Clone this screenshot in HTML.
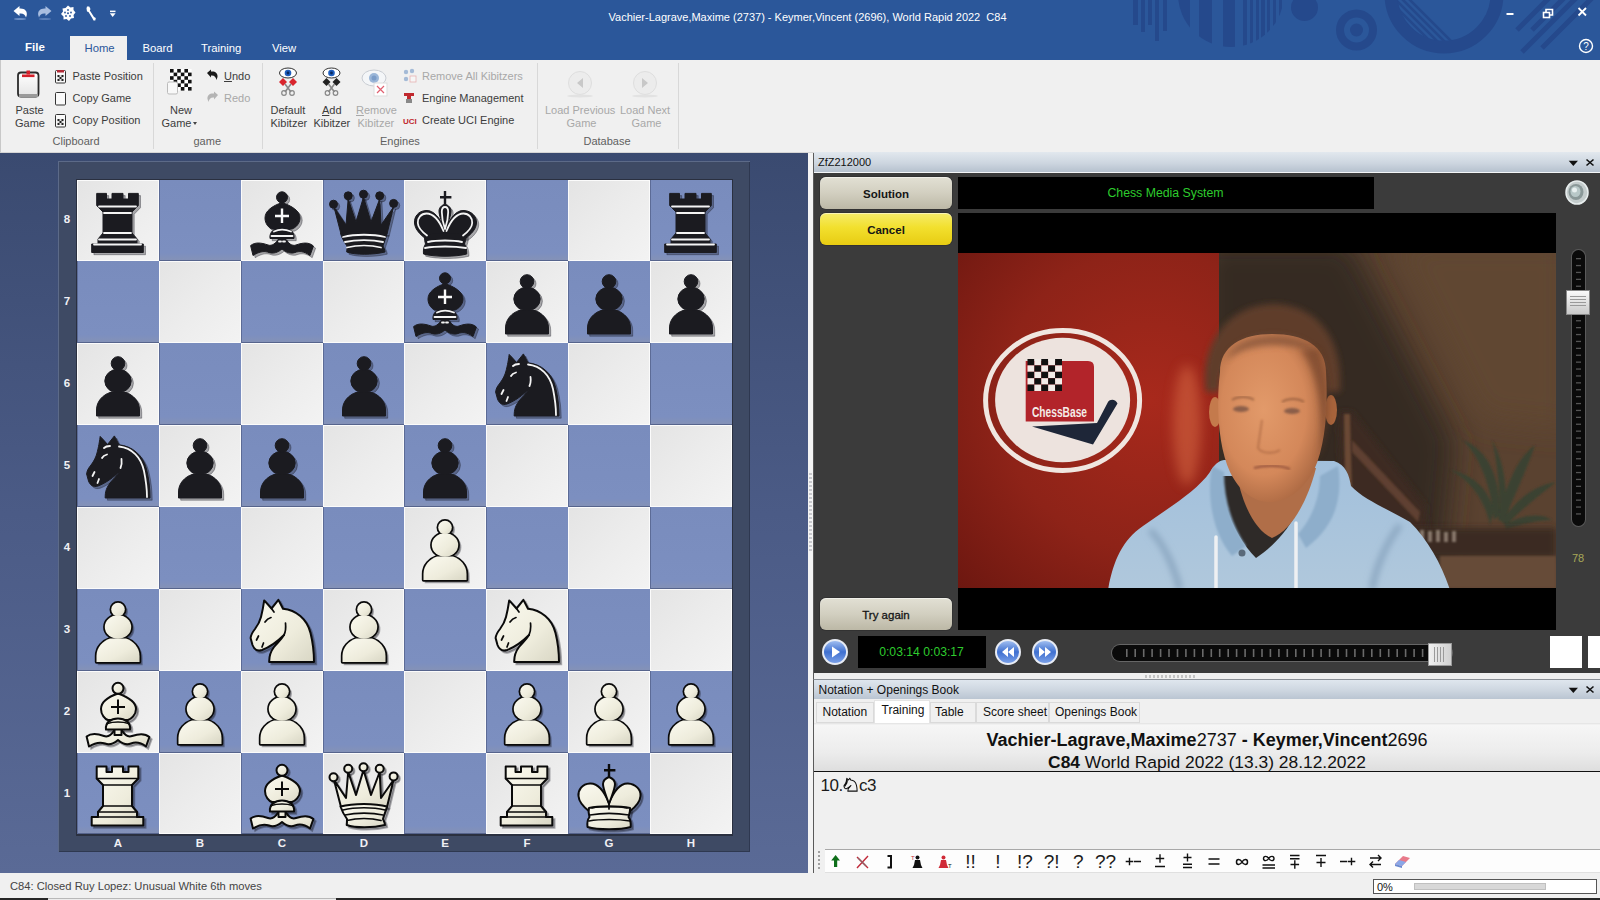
<!DOCTYPE html><html><head><meta charset="utf-8"><style>
*{box-sizing:border-box;margin:0;padding:0}
html,body{width:1600px;height:900px;overflow:hidden;background:#f0f0f0;font-family:"Liberation Sans",sans-serif;color:#000}
.a{position:absolute}
.t{position:absolute;white-space:pre;line-height:1}
.sq{position:absolute;overflow:hidden}
.sq svg{position:absolute;left:0;top:0}
.sl{background:linear-gradient(135deg,#e4e4e4 0%,#ececec 50%,#f3f3f3 100%);box-shadow:inset 0 0 0 1px #fbfbfb}
.sd{background:linear-gradient(180deg,#798cbd 0%,#7c8fc0 90%,#8592b6 100%);box-shadow:inset 1px 0 0 #5c6b96, inset 0 -1px 0 #56648c}
.coord{position:absolute;color:#f0f0f4;font-size:11.5px;font-weight:700;line-height:1}
</style></head><body>
<svg width="0" height="0" style="position:absolute"><defs><linearGradient id="wgrad" x1="0" y1="0" x2="1" y2="1"><stop offset="0" stop-color="#fbfaf0"/><stop offset="0.6" stop-color="#eeecdc"/><stop offset="1" stop-color="#d8d6c4"/></linearGradient><symbol id="wp" viewBox="0 0 82 82"><g transform="translate(2.2,2.2)" fill="rgba(20,20,30,0.33)" stroke="rgba(20,20,30,0.33)" stroke-width="2"><path d="M19.5,73 V67 C19.5,58 26,52 33,49.5 H49 C56,52 62.5,58 62.5,67 V73 Z"/><ellipse cx="41" cy="38" rx="13.2" ry="11.8"/><circle cx="41" cy="20.5" r="6.8"/></g><g fill="#0a0a0a" stroke="#0a0a0a" stroke-width="3.4" stroke-linejoin="round"><path d="M19.5,73 V67 C19.5,58 26,52 33,49.5 H49 C56,52 62.5,58 62.5,67 V73 Z"/><ellipse cx="41" cy="38" rx="13.2" ry="11.8"/><circle cx="41" cy="20.5" r="6.8"/></g><g fill="url(#wgrad)" stroke="none"><path d="M19.5,73 V67 C19.5,58 26,52 33,49.5 H49 C56,52 62.5,58 62.5,67 V73 Z"/><ellipse cx="41" cy="38" rx="13.2" ry="11.8"/><circle cx="41" cy="20.5" r="6.8"/></g></symbol><symbol id="wr" viewBox="0 0 82 82"><g transform="translate(2.2,2.2)" fill="rgba(20,20,30,0.33)" stroke="rgba(20,20,30,0.33)" stroke-width="2"><path d="M19.7,13.4 H29.5 V19 H35 V13.4 H46 V19 H51.5 V13.4 H61.3 V25.5 L55,32 V53 L60,59 V64 H66.3 V72.5 H14.7 V64 H21 V59 L26,53 V32 L19.7,25.5 Z"/></g><g fill="url(#wgrad)" stroke="#0a0a0a" stroke-width="2" stroke-linejoin="round"><path d="M19.7,13.4 H29.5 V19 H35 V13.4 H46 V19 H51.5 V13.4 H61.3 V25.5 L55,32 V53 L60,59 V64 H66.3 V72.5 H14.7 V64 H21 V59 L26,53 V32 L19.7,25.5 Z"/></g><path d="M19.7,25.5 H61.3 M26,32 H55 M26,53 H55 M21,59 H60 M14.7,64 H66.3" fill="none" stroke="#0a0a0a" stroke-width="1.7" stroke-linecap="round"/></symbol><symbol id="wn" viewBox="0 0 82 82"><g transform="translate(2.2,2.2)" fill="rgba(20,20,30,0.33)" stroke="rgba(20,20,30,0.33)" stroke-width="2"><path d="M23.2,11.4 L30.5,19.5 L37.4,10.9 L42,19.8 C55,21 66,30 69.5,44 C72,54 73,64 73,73 L28.2,73 C28,66 30,62 33,58 C36,54 40,51 43,46 C37,52 29,58 21,61 C16,62.5 13,60 11.5,56 L9.6,49 C10,45 12,42.5 14,40 C17,36 19,32 20,28 C21,24 22,20 23.2,11.4 Z"/></g><g fill="url(#wgrad)" stroke="#0a0a0a" stroke-width="2" stroke-linejoin="round"><path d="M23.2,11.4 L30.5,19.5 L37.4,10.9 L42,19.8 C55,21 66,30 69.5,44 C72,54 73,64 73,73 L28.2,73 C28,66 30,62 33,58 C36,54 40,51 43,46 C37,52 29,58 21,61 C16,62.5 13,60 11.5,56 L9.6,49 C10,45 12,42.5 14,40 C17,36 19,32 20,28 C21,24 22,20 23.2,11.4 Z"/></g><path d="M44.5,34 C45,39 44.5,43 43,46 M24,33 C26,30 28,29 30,28.5 M15.5,51 L17.5,47 M21,58 L22.5,54 M30.5,19.5 L33,23" fill="none" stroke="#0a0a0a" stroke-width="1.7" stroke-linecap="round"/></symbol><symbol id="wb" viewBox="0 0 82 82"><g transform="translate(2.2,2.2)" fill="rgba(20,20,30,0.33)" stroke="rgba(20,20,30,0.33)" stroke-width="2"><path d="M9.6,65.6 C14,62 20,62.5 27,65 C31,66.5 35,63 37.5,59 H44.5 C47,63 51,66.5 55,65 C62,62.5 68,62 72.4,66 L69,75.5 C63,71 58,71 54,72.5 C50,74 45,72.5 41,69 C37,72.5 32,74 28,72.5 C24,71 19,71 12,75.5 Z"/><path d="M37.5,58 H44.5 V64 H37.5 Z"/><path d="M41,22.5 C31,26 24,31 24,38 C24,44 28,48 31,49 H51 C54,48 59,44 59,38 C59,31 51,26 41,22.5 Z"/><path d="M29,58.5 C28,51.5 34,47.5 41,47.5 C48,47.5 54,51.5 53,58.5 Z"/><circle cx="41" cy="17.3" r="5.5"/></g><g fill="url(#wgrad)" stroke="#0a0a0a" stroke-width="2" stroke-linejoin="round"><path d="M9.6,65.6 C14,62 20,62.5 27,65 C31,66.5 35,63 37.5,59 H44.5 C47,63 51,66.5 55,65 C62,62.5 68,62 72.4,66 L69,75.5 C63,71 58,71 54,72.5 C50,74 45,72.5 41,69 C37,72.5 32,74 28,72.5 C24,71 19,71 12,75.5 Z"/><path d="M37.5,58 H44.5 V64 H37.5 Z"/><path d="M41,22.5 C31,26 24,31 24,38 C24,44 28,48 31,49 H51 C54,48 59,44 59,38 C59,31 51,26 41,22.5 Z"/><path d="M29,58.5 C28,51.5 34,47.5 41,47.5 C48,47.5 54,51.5 53,58.5 Z"/><circle cx="41" cy="17.3" r="5.5"/></g><path d="M30.5,52.5 C36,50.5 46,50.5 51.5,52.5" fill="none" stroke="#0a0a0a" stroke-width="1.7" stroke-linecap="round"/><path d="M41,28.5 V43 M34,36 H48" fill="none" stroke="#0a0a0a" stroke-width="2"/></symbol><symbol id="wq" viewBox="0 0 82 82"><g transform="translate(2.2,2.2)" fill="rgba(20,20,30,0.33)" stroke="rgba(20,20,30,0.33)" stroke-width="2"><path d="M11,27 L18,54 H64 L70.5,27 L58,45 L56.7,19 L48,42 L40.5,17 L33,42 L25.2,19 L23,45 Z"/><circle cx="10.5" cy="24.2" r="4"/><circle cx="25.2" cy="15.8" r="4"/><circle cx="40.5" cy="14.2" r="4"/><circle cx="56.7" cy="15.8" r="4"/><circle cx="70.6" cy="23.4" r="4"/><path d="M17.5,53.5 C30,50 52,50 64,53.5 C63,58 61,62 60,66 C61,68 62,70 62,72 C50,75 32,75 23.7,72 C24,70 24,68 24,66 C21,62 19,58 17.5,53.5 Z"/></g><g fill="url(#wgrad)" stroke="#0a0a0a" stroke-width="2" stroke-linejoin="round"><path d="M11,27 L18,54 H64 L70.5,27 L58,45 L56.7,19 L48,42 L40.5,17 L33,42 L25.2,19 L23,45 Z"/><circle cx="10.5" cy="24.2" r="4"/><circle cx="25.2" cy="15.8" r="4"/><circle cx="40.5" cy="14.2" r="4"/><circle cx="56.7" cy="15.8" r="4"/><circle cx="70.6" cy="23.4" r="4"/><path d="M17.5,53.5 C30,50 52,50 64,53.5 C63,58 61,62 60,66 C61,68 62,70 62,72 C50,75 32,75 23.7,72 C24,70 24,68 24,66 C21,62 19,58 17.5,53.5 Z"/></g><path d="M20,57 C32,54 50,54 62,57 M22,62 C33,59.5 49,59.5 60,62 M24,67.5 C34,65 48,65 58,67.5" fill="none" stroke="#0a0a0a" stroke-width="1.7" stroke-linecap="round"/></symbol><symbol id="wk" viewBox="0 0 82 82"><g transform="translate(2.2,2.2)" fill="rgba(20,20,30,0.33)" stroke="rgba(20,20,30,0.33)" stroke-width="2"><path d="M41,50 C36,38 30,30 22,30.5 C14,31 10,37 10.5,43 C11,50 17,55 21,58 H62 C66,55 72,50 72.5,43 C73,37 68,31 60,30.5 C52,30 46,38 41,50 Z"/><path d="M41,24 C37,25.5 35,28 35,31 C35,36 38,42 41,51 C44,42 47,36 47,31 C47,28 45,25.5 41,24 Z"/><path d="M21,55 C30,52.5 52,52.5 62,55 C62.5,59 61,62 60.5,64 C62,66 63,70 62.7,74 C52,77 30,77 19.5,74 C19,70 20,66 21.5,64 C21,62 20,59 21,55 Z"/></g><g fill="url(#wgrad)" stroke="#0a0a0a" stroke-width="2" stroke-linejoin="round"><path d="M41,50 C36,38 30,30 22,30.5 C14,31 10,37 10.5,43 C11,50 17,55 21,58 H62 C66,55 72,50 72.5,43 C73,37 68,31 60,30.5 C52,30 46,38 41,50 Z"/><path d="M41,24 C37,25.5 35,28 35,31 C35,36 38,42 41,51 C44,42 47,36 47,31 C47,28 45,25.5 41,24 Z"/><path d="M21,55 C30,52.5 52,52.5 62,55 C62.5,59 61,62 60.5,64 C62,66 63,70 62.7,74 C52,77 30,77 19.5,74 C19,70 20,66 21.5,64 C21,62 20,59 21,55 Z"/></g><path d="M24,55 C33,53 49,53 59,55 M41,51 V56 M22,62 C33,60 49,60 61,62 M21,68 C32,66 50,66 62,68" fill="none" stroke="#0a0a0a" stroke-width="1.7" stroke-linecap="round"/><path d="M41,10.9 V24.6 M36,17.3 H47.4" fill="none" stroke="#0a0a0a" stroke-width="2.4"/></symbol><symbol id="bp" viewBox="0 0 82 82"><g transform="translate(2.2,2.2)" fill="rgba(20,20,30,0.33)" stroke="rgba(20,20,30,0.33)" stroke-width="1"><path d="M19.5,73 V67 C19.5,58 26,52 33,49.5 H49 C56,52 62.5,58 62.5,67 V73 Z"/><ellipse cx="41" cy="38" rx="13.2" ry="11.8"/><circle cx="41" cy="20.5" r="6.8"/></g><g fill="#1b1b20" stroke="#1b1b20" stroke-width="1" stroke-linejoin="round"><path d="M19.5,73 V67 C19.5,58 26,52 33,49.5 H49 C56,52 62.5,58 62.5,67 V73 Z"/><ellipse cx="41" cy="38" rx="13.2" ry="11.8"/><circle cx="41" cy="20.5" r="6.8"/></g></symbol><symbol id="br" viewBox="0 0 82 82"><g transform="translate(2.2,2.2)" fill="rgba(20,20,30,0.33)" stroke="rgba(20,20,30,0.33)" stroke-width="1"><path d="M19.7,13.4 H29.5 V19 H35 V13.4 H46 V19 H51.5 V13.4 H61.3 V25.5 L55,32 V53 L60,59 V64 H66.3 V72.5 H14.7 V64 H21 V59 L26,53 V32 L19.7,25.5 Z"/></g><g fill="#1b1b20" stroke="#1b1b20" stroke-width="1" stroke-linejoin="round"><path d="M19.7,13.4 H29.5 V19 H35 V13.4 H46 V19 H51.5 V13.4 H61.3 V25.5 L55,32 V53 L60,59 V64 H66.3 V72.5 H14.7 V64 H21 V59 L26,53 V32 L19.7,25.5 Z"/></g><path d="M22,26.5 H59 M27,33 H54 M27,53 H54 M22,59.5 H59 M17,64.5 H64" fill="none" stroke="#f4f4f4" stroke-width="1.8" stroke-linecap="round"/></symbol><symbol id="bn" viewBox="0 0 82 82"><g transform="translate(2.2,2.2)" fill="rgba(20,20,30,0.33)" stroke="rgba(20,20,30,0.33)" stroke-width="1"><path d="M23.2,11.4 L30.5,19.5 L37.4,10.9 L42,19.8 C55,21 66,30 69.5,44 C72,54 73,64 73,73 L28.2,73 C28,66 30,62 33,58 C36,54 40,51 43,46 C37,52 29,58 21,61 C16,62.5 13,60 11.5,56 L9.6,49 C10,45 12,42.5 14,40 C17,36 19,32 20,28 C21,24 22,20 23.2,11.4 Z"/></g><g fill="#1b1b20" stroke="#1b1b20" stroke-width="1" stroke-linejoin="round"><path d="M23.2,11.4 L30.5,19.5 L37.4,10.9 L42,19.8 C55,21 66,30 69.5,44 C72,54 73,64 73,73 L28.2,73 C28,66 30,62 33,58 C36,54 40,51 43,46 C37,52 29,58 21,61 C16,62.5 13,60 11.5,56 L9.6,49 C10,45 12,42.5 14,40 C17,36 19,32 20,28 C21,24 22,20 23.2,11.4 Z"/></g><path d="M42,21.5 C55,23 64,32 67,46 C69,56 70,64 70,72 M27,23 C29,21 31,21 33,21 M44.5,34 C45,38 44.5,41 43.5,43 M25,33 C26,31 28,30 30,29.5 M15.5,51 L17.5,47 M20.5,58 L22,54" fill="none" stroke="#f4f4f4" stroke-width="1.8" stroke-linecap="round"/></symbol><symbol id="bb" viewBox="0 0 82 82"><g transform="translate(2.2,2.2)" fill="rgba(20,20,30,0.33)" stroke="rgba(20,20,30,0.33)" stroke-width="1"><path d="M9.6,65.6 C14,62 20,62.5 27,65 C31,66.5 35,63 37.5,59 H44.5 C47,63 51,66.5 55,65 C62,62.5 68,62 72.4,66 L69,75.5 C63,71 58,71 54,72.5 C50,74 45,72.5 41,69 C37,72.5 32,74 28,72.5 C24,71 19,71 12,75.5 Z"/><path d="M37.5,58 H44.5 V64 H37.5 Z"/><path d="M41,22.5 C31,26 24,31 24,38 C24,44 28,48 31,49 H51 C54,48 59,44 59,38 C59,31 51,26 41,22.5 Z"/><path d="M29,58.5 C28,51.5 34,47.5 41,47.5 C48,47.5 54,51.5 53,58.5 Z"/><circle cx="41" cy="17.3" r="5.5"/></g><g fill="#1b1b20" stroke="#1b1b20" stroke-width="1" stroke-linejoin="round"><path d="M9.6,65.6 C14,62 20,62.5 27,65 C31,66.5 35,63 37.5,59 H44.5 C47,63 51,66.5 55,65 C62,62.5 68,62 72.4,66 L69,75.5 C63,71 58,71 54,72.5 C50,74 45,72.5 41,69 C37,72.5 32,74 28,72.5 C24,71 19,71 12,75.5 Z"/><path d="M37.5,58 H44.5 V64 H37.5 Z"/><path d="M41,22.5 C31,26 24,31 24,38 C24,44 28,48 31,49 H51 C54,48 59,44 59,38 C59,31 51,26 41,22.5 Z"/><path d="M29,58.5 C28,51.5 34,47.5 41,47.5 C48,47.5 54,51.5 53,58.5 Z"/><circle cx="41" cy="17.3" r="5.5"/></g><path d="M33,51.5 C38,49 44,49 50,51.5 M30.5,56 H51.5 M38,61.5 H40 M42,61.5 H44" fill="none" stroke="#f4f4f4" stroke-width="1.8" stroke-linecap="round"/><path d="M41,28.5 V43 M34,36 H48" fill="none" stroke="#fafafa" stroke-width="2.4"/></symbol><symbol id="bq" viewBox="0 0 82 82"><g transform="translate(2.2,2.2)" fill="rgba(20,20,30,0.33)" stroke="rgba(20,20,30,0.33)" stroke-width="1"><path d="M11,27 L18,54 H64 L70.5,27 L58,45 L56.7,19 L48,42 L40.5,17 L33,42 L25.2,19 L23,45 Z"/><circle cx="10.5" cy="24.2" r="4"/><circle cx="25.2" cy="15.8" r="4"/><circle cx="40.5" cy="14.2" r="4"/><circle cx="56.7" cy="15.8" r="4"/><circle cx="70.6" cy="23.4" r="4"/><path d="M17.5,53.5 C30,50 52,50 64,53.5 C63,58 61,62 60,66 C61,68 62,70 62,72 C50,75 32,75 23.7,72 C24,70 24,68 24,66 C21,62 19,58 17.5,53.5 Z"/></g><g fill="#1b1b20" stroke="#1b1b20" stroke-width="1" stroke-linejoin="round"><path d="M11,27 L18,54 H64 L70.5,27 L58,45 L56.7,19 L48,42 L40.5,17 L33,42 L25.2,19 L23,45 Z"/><circle cx="10.5" cy="24.2" r="4"/><circle cx="25.2" cy="15.8" r="4"/><circle cx="40.5" cy="14.2" r="4"/><circle cx="56.7" cy="15.8" r="4"/><circle cx="70.6" cy="23.4" r="4"/><path d="M17.5,53.5 C30,50 52,50 64,53.5 C63,58 61,62 60,66 C61,68 62,70 62,72 C50,75 32,75 23.7,72 C24,70 24,68 24,66 C21,62 19,58 17.5,53.5 Z"/></g><path d="M20,57 C32,54 50,54 62,57 M22,62 C33,59.5 49,59.5 60,62 M24,67.5 C34,65 48,65 58,67.5" fill="none" stroke="#f4f4f4" stroke-width="1.8" stroke-linecap="round"/></symbol><symbol id="bk" viewBox="0 0 82 82"><g transform="translate(2.2,2.2)" fill="rgba(20,20,30,0.33)" stroke="rgba(20,20,30,0.33)" stroke-width="1"><path d="M41,50 C36,38 30,30 22,30.5 C14,31 10,37 10.5,43 C11,50 17,55 21,58 H62 C66,55 72,50 72.5,43 C73,37 68,31 60,30.5 C52,30 46,38 41,50 Z"/><path d="M41,24 C37,25.5 35,28 35,31 C35,36 38,42 41,51 C44,42 47,36 47,31 C47,28 45,25.5 41,24 Z"/><path d="M21,55 C30,52.5 52,52.5 62,55 C62.5,59 61,62 60.5,64 C62,66 63,70 62.7,74 C52,77 30,77 19.5,74 C19,70 20,66 21.5,64 C21,62 20,59 21,55 Z"/></g><g fill="#1b1b20" stroke="#1b1b20" stroke-width="1" stroke-linejoin="round"><path d="M41,50 C36,38 30,30 22,30.5 C14,31 10,37 10.5,43 C11,50 17,55 21,58 H62 C66,55 72,50 72.5,43 C73,37 68,31 60,30.5 C52,30 46,38 41,50 Z"/><path d="M41,24 C37,25.5 35,28 35,31 C35,36 38,42 41,51 C44,42 47,36 47,31 C47,28 45,25.5 41,24 Z"/><path d="M21,55 C30,52.5 52,52.5 62,55 C62.5,59 61,62 60.5,64 C62,66 63,70 62.7,74 C52,77 30,77 19.5,74 C19,70 20,66 21.5,64 C21,62 20,59 21,55 Z"/></g><path d="M23,55.5 C19,52.5 14,48 13.8,43 C13.5,38 17,33.5 22.5,33.5 C29,33.5 35,40 39.5,51 M59,55.5 C63,52.5 68,48 68.2,43 C68.5,38 65,33.5 59.5,33.5 C53,33.5 47,40 42.5,51 M41,49 C38.5,42 37.8,37 37.8,32 C37.8,29 39,27 41,27 C43,27 44.2,29 44.2,32 C44.2,37 43.5,42 41,49 M24,62 C33,60 49,60 58,62 M21,68 C32,66 50,66 62,68" fill="none" stroke="#f4f4f4" stroke-width="1.8" stroke-linecap="round"/><path d="M41,10.9 V24.6 M36,17.3 H47.4" fill="none" stroke="#1b1b20" stroke-width="2.4"/></symbol></defs></svg>
<div class="a" style="left:0;top:0;width:1600px;height:60px;background:#2b579a;overflow:hidden">
<svg class="a" style="left:0;top:0" width="1600" height="60"><defs><clipPath id="hc"><circle cx="1231" cy="-6" r="53"/></clipPath><clipPath id="rc"><circle cx="1444" cy="-6" r="47"/></clipPath></defs><g fill="#25498c"><rect x="1133" y="0" width="5" height="25"/><rect x="1141" y="0" width="4" height="32"/><rect x="1148" y="0" width="4" height="25"/><rect x="1155" y="0" width="4" height="41"/><rect x="1163" y="0" width="4" height="31"/><g clip-path="url(#hc)"><rect x="1178" y="0" width="12" height="60"/><rect x="1199" y="0" width="13" height="60"/><rect x="1223" y="0" width="12" height="60"/><rect x="1243" y="0" width="4" height="60"/><rect x="1250" y="0" width="3" height="60"/><rect x="1256" y="0" width="3" height="60"/><rect x="1261" y="0" width="4" height="60"/><rect x="1267" y="0" width="3" height="60"/><rect x="1273" y="0" width="3" height="60"/><rect x="1279" y="0" width="3" height="60"/><rect x="1285" y="0" width="3" height="60"/></g><circle cx="1304.5" cy="7.5" r="13.5"/><circle cx="1356.5" cy="30" r="16.5" fill="none" stroke="#25498c" stroke-width="8"/><circle cx="1356.5" cy="30" r="6.5"/><circle cx="1444" cy="-6" r="53" fill="none" stroke="#25498c" stroke-width="13"/><g clip-path="url(#rc)" stroke="#25498c" stroke-width="2.5"><line x1="1355" y1="-20" x2="1425" y2="50"/><line x1="1362" y1="-20" x2="1432" y2="50"/><line x1="1369" y1="-20" x2="1439" y2="50"/><line x1="1376" y1="-20" x2="1446" y2="50"/><line x1="1383" y1="-20" x2="1453" y2="50"/><line x1="1390" y1="-20" x2="1460" y2="50"/></g><g stroke="#25498c" stroke-width="5"><line x1="1517" y1="30" x2="1552" y2="-5"/><line x1="1532" y1="30" x2="1567" y2="-5"/><line x1="1522" y1="52" x2="1580" y2="-6"/><line x1="1542" y1="48" x2="1598" y2="-8"/></g></g><g stroke="#fff" fill="none" stroke-width="1.6"><line x1="1506.5" y1="14" x2="1513.5" y2="14" stroke-width="2"/><rect x="1543.5" y="12.5" width="6" height="5"/><path d="M1546,12.5 V9.5 H1552.5 V15 H1549.5"/><path d="M1578.5,8 L1586,15.5 M1586,8 L1578.5,15.5" stroke-width="1.8"/><circle cx="1586" cy="46" r="6.5" stroke-width="1.4"/></g><text x="1586" y="50" font-size="10" fill="#fff" text-anchor="middle" font-family="Liberation Sans">?</text><g fill="#fff"><path d="M13.5,11 L19.5,6 V8.5 C24.5,8 27.5,11 26.8,15 L26,17.5 C25,14.5 23,13 19.5,13.5 V16 Z" /><ellipse cx="20" cy="19" rx="6" ry="1" fill="#9ab4e0" opacity="0.6"/><path d="M51.5,11 L45.5,6 V8.5 C40.5,8 37.5,11 38.2,15 L39,17.5 C40,14.5 42,13 45.5,13.5 V16 Z" fill="#a8bde0"/><ellipse cx="45" cy="19" rx="6" ry="1" fill="#7a98cc" opacity="0.6"/><path d="M68,5.5 L70.5,7.5 L73.5,7 L73.5,10 L75.5,12.5 L73.5,15 L74,18 L71,18.5 L69,21 L66.5,19 L63.5,19.5 L63.5,16.5 L61,14 L63,11.5 L62.5,8.5 L65.5,8 Z"/><g fill="#2b579a"><circle cx="68" cy="10" r="0.9"/><circle cx="71" cy="12.5" r="0.9"/><circle cx="70" cy="16" r="0.9"/><circle cx="66" cy="16" r="0.9"/><circle cx="65" cy="12.5" r="0.9"/><circle cx="68" cy="13.3" r="1"/></g><path d="M87,6.5 L89.2,6.5 L90.5,9 L89.8,10.5 L94,17 L95.8,18 L95.3,20.5 L93.5,20.5 L92.5,18.5 L88.5,12 L87,11.5 L86.5,8.5 Z"/><rect x="110" y="10.6" width="5.5" height="1.5"/><path d="M109.8,13.3 H115.6 L112.7,17 Z"/></g></svg>
<div class="t" style="left:608.5px;top:11.7px;font-size:11px;font-weight:400;color:#ffffff;">Vachier-Lagrave,Maxime (2737) - Keymer,Vincent (2696), World Rapid 2022  C84</div>
<div class="a" style="left:70px;top:36px;width:57px;height:24px;background:#f0f0f0"></div>
<div class="t" style="left:25.0px;top:42.3px;font-size:11.5px;font-weight:700;color:#ffffff;">File</div>
<div class="t" style="left:84.5px;top:43.4px;font-size:11.3px;font-weight:400;color:#2b579a;">Home</div>
<div class="t" style="left:142.5px;top:43.4px;font-size:11.3px;font-weight:400;color:#ffffff;">Board</div>
<div class="t" style="left:201.0px;top:43.4px;font-size:11.3px;font-weight:400;color:#ffffff;">Training</div>
<div class="t" style="left:272.0px;top:43.4px;font-size:11.3px;font-weight:400;color:#ffffff;">View</div>
</div>
<div class="a" style="left:0;top:60px;width:1600px;height:93px;background:#f0f0f0;border-left:1px solid #c8c8c8;border-bottom:1px solid #d5d5d5"></div>
<div class="a" style="left:152.5px;top:63px;width:1px;height:86px;background:#d8d8d8"></div>
<div class="a" style="left:261.5px;top:63px;width:1px;height:86px;background:#d8d8d8"></div>
<div class="a" style="left:536.5px;top:63px;width:1px;height:86px;background:#d8d8d8"></div>
<div class="a" style="left:677.5px;top:63px;width:1px;height:86px;background:#d8d8d8"></div>
<svg class="a" style="left:0;top:60px" width="700" height="93" viewBox="0 60 700 93"><defs><linearGradient id="cg" x1="0" y1="0" x2="0" y2="1"><stop offset="0" stop-color="#fff"/><stop offset="1" stop-color="#e4e4e4"/></linearGradient><linearGradient id="bg" x1="0" y1="0" x2="0" y2="1"><stop offset="0" stop-color="#f4f4f4"/><stop offset="1" stop-color="#c8c8c8"/></linearGradient></defs><rect x="18" y="72.5" width="20.5" height="24" rx="3" fill="url(#cg)" stroke="#2a2a2a" stroke-width="1.8"/><rect x="19" y="94" width="19" height="3" fill="#9a9a9a"/><rect x="22" y="74.5" width="12.5" height="2.6" fill="#d4202a"/><rect x="26.5" y="70.5" width="3.5" height="4" fill="#d4202a"/><rect x="55.5" y="70.5" width="10" height="12.5" rx="1" fill="#fafafa" stroke="#333" stroke-width="1"/><rect x="57" y="70" width="7" height="2.5" fill="#b02a36"/><rect x="57.5" y="75" width="6" height="6" fill="#ddd"/><rect x="57.5" y="75" width="2" height="2" fill="#222"/><rect x="57.5" y="79" width="2" height="2" fill="#222"/><rect x="59.5" y="77" width="2" height="2" fill="#222"/><rect x="61.5" y="75" width="2" height="2" fill="#222"/><rect x="61.5" y="79" width="2" height="2" fill="#222"/><rect x="55.5" y="92.5" width="10" height="12.5" rx="1" fill="#fafafa" stroke="#333" stroke-width="1"/><rect x="55.5" y="114.5" width="10" height="12.5" rx="1" fill="#fafafa" stroke="#333" stroke-width="1"/><rect x="57.5" y="119" width="6" height="6" fill="#ddd"/><rect x="57.5" y="119" width="2" height="2" fill="#222"/><rect x="57.5" y="123" width="2" height="2" fill="#222"/><rect x="59.5" y="121" width="2" height="2" fill="#222"/><rect x="61.5" y="119" width="2" height="2" fill="#222"/><rect x="61.5" y="123" width="2" height="2" fill="#222"/><rect x="170" y="69" width="21.6" height="21.6" fill="#fff"/><rect x="170.0" y="69.0" width="3.6" height="3.6" fill="#111"/><rect x="170.0" y="76.2" width="3.6" height="3.6" fill="#111"/><rect x="170.0" y="83.4" width="3.6" height="3.6" fill="#111"/><rect x="173.6" y="72.6" width="3.6" height="3.6" fill="#111"/><rect x="173.6" y="79.8" width="3.6" height="3.6" fill="#111"/><rect x="173.6" y="87.0" width="3.6" height="3.6" fill="#111"/><rect x="177.2" y="69.0" width="3.6" height="3.6" fill="#111"/><rect x="177.2" y="76.2" width="3.6" height="3.6" fill="#111"/><rect x="177.2" y="83.4" width="3.6" height="3.6" fill="#111"/><rect x="180.8" y="72.6" width="3.6" height="3.6" fill="#111"/><rect x="180.8" y="79.8" width="3.6" height="3.6" fill="#111"/><rect x="180.8" y="87.0" width="3.6" height="3.6" fill="#111"/><rect x="184.4" y="69.0" width="3.6" height="3.6" fill="#111"/><rect x="184.4" y="76.2" width="3.6" height="3.6" fill="#111"/><rect x="184.4" y="83.4" width="3.6" height="3.6" fill="#111"/><rect x="188.0" y="72.6" width="3.6" height="3.6" fill="#111"/><rect x="188.0" y="79.8" width="3.6" height="3.6" fill="#111"/><rect x="188.0" y="87.0" width="3.6" height="3.6" fill="#111"/><rect x="167.5" y="82" width="10" height="12" rx="1.5" fill="#f8f8f8" stroke="#bbb" stroke-width="1"/><path d="M207,73 L211,69.5 V71.5 C215,71 218,73 217.5,77 L216.5,80 C216,77 214,75 211,75.5 V77.5 Z" fill="#1a1a1a"/><path d="M218,95 L214,91.5 V93.5 C210,93 207,95 207.5,99 L208.5,102 C209,99 211,97 214,97.5 V99.5 Z" fill="#b4b4b4"/><ellipse cx="288" cy="73" rx="8.5" ry="5" fill="#fff" stroke="#333" stroke-width="1"/><circle cx="288" cy="73" r="3.3" fill="#1f5fbf"/><circle cx="288" cy="73" r="1.4" fill="#0a2a60"/><path d="M279,82 l4,-4 l4,4 l-4,4 z M289,82 l4,-4 l4,4 l-4,4 z" fill="#d9252d" transform="rotate(0)"/><path d="M285,84 L291,92 M291,84 L285,92" stroke="#888" stroke-width="1.6"/><circle cx="284" cy="93" r="2.3" fill="none" stroke="#888" stroke-width="1.2"/><circle cx="292" cy="93" r="2.3" fill="none" stroke="#888" stroke-width="1.2"/><ellipse cx="331.5" cy="73" rx="8.5" ry="5" fill="#fff" stroke="#333" stroke-width="1"/><circle cx="331.5" cy="73" r="3.3" fill="#1f5fbf"/><circle cx="331.5" cy="73" r="1.4" fill="#0a2a60"/><path d="M322.5,82 l4,-4 l4,4 l-4,4 z M332.5,82 l4,-4 l4,4 l-4,4 z" fill="#222" transform="rotate(0)"/><path d="M328.5,84 L334.5,92 M334.5,84 L328.5,92" stroke="#888" stroke-width="1.6"/><circle cx="327.5" cy="93" r="2.3" fill="none" stroke="#888" stroke-width="1.2"/><circle cx="335.5" cy="93" r="2.3" fill="none" stroke="#888" stroke-width="1.2"/><ellipse cx="374" cy="78" rx="12" ry="8" fill="#f4f6f8" stroke="#c8ccd2" stroke-width="1"/><circle cx="374" cy="78" r="5" fill="#9ab6d8"/><circle cx="374" cy="78" r="2.5" fill="#7a9cc8"/><rect x="374" y="83" width="13" height="13" fill="#fff" stroke="#ddd" stroke-width="1"/><path d="M377,86 L384,93 M384,86 L377,93" stroke="#e06070" stroke-width="1.2"/><g opacity="0.45"><circle cx="406" cy="72" r="2.2" fill="#4a7ab8"/><circle cx="412" cy="71" r="2.2" fill="#4a7ab8"/><circle cx="406" cy="79" r="2.2" fill="#4a7ab8"/><rect x="410" y="76" width="6" height="6" fill="#fff" stroke="#d66" stroke-width="0.8"/></g><path d="M404,93 h10 v3 h-3 v3 h-4 v-3 h-3 z" fill="#c0282e"/><rect x="406" y="99" width="6" height="4" fill="#888"/><text x="403" y="124" font-family="Liberation Sans" font-size="8" font-weight="700" fill="#c0282e">UCI</text><circle cx="580" cy="83" r="11.5" fill="#ececec" stroke="#dedede" stroke-width="1"/><ellipse cx="580" cy="96" rx="13" ry="1.5" fill="#e2e2e2"/><path d="M577,83 L583,78 V88 Z" fill="#c8c8c8"/><circle cx="645" cy="83" r="11.5" fill="#ececec" stroke="#dedede" stroke-width="1"/><ellipse cx="645" cy="96" rx="13" ry="1.5" fill="#e2e2e2"/><path d="M648,83 L642,78 V88 Z" fill="#c8c8c8"/></svg>
<div class="t" style="left:15.5px;top:104.7px;font-size:11px;font-weight:400;color:#3c3c3c;">Paste</div>
<div class="t" style="left:15.0px;top:117.7px;font-size:11px;font-weight:400;color:#3c3c3c;">Game</div>
<div class="t" style="left:72.5px;top:70.7px;font-size:11px;font-weight:400;color:#3c3c3c;">Paste Position</div>
<div class="t" style="left:72.5px;top:93.2px;font-size:11px;font-weight:400;color:#3c3c3c;">Copy Game</div>
<div class="t" style="left:72.5px;top:115.2px;font-size:11px;font-weight:400;color:#3c3c3c;">Copy Position</div>
<div class="t" style="left:52.5px;top:136.2px;font-size:11px;font-weight:400;color:#606060;">Clipboard</div>
<div class="t" style="left:170.0px;top:104.7px;font-size:11px;font-weight:400;color:#3c3c3c;">New</div>
<div class="t" style="left:161.5px;top:117.7px;font-size:11px;font-weight:400;color:#3c3c3c;">Game</div>
<div class="a" style="left:193px;top:122px;width:0;height:0;border-left:2.5px solid transparent;border-right:2.5px solid transparent;border-top:3px solid #444"></div>
<div class="t" style="left:224.0px;top:70.7px;font-size:11px;font-weight:400;color:#3c3c3c;"><u>U</u>ndo</div>
<div class="t" style="left:224.0px;top:93.2px;font-size:11px;font-weight:400;color:#a8a8a8;">Redo</div>
<div class="t" style="left:193.5px;top:136.2px;font-size:11px;font-weight:400;color:#606060;">game</div>
<div class="t" style="left:270.5px;top:104.7px;font-size:11px;font-weight:400;color:#3c3c3c;">Default</div>
<div class="t" style="left:270.5px;top:117.7px;font-size:11px;font-weight:400;color:#3c3c3c;">Kibitzer</div>
<div class="t" style="left:322.0px;top:104.7px;font-size:11px;font-weight:400;color:#3c3c3c;"><u>A</u>dd</div>
<div class="t" style="left:313.5px;top:117.7px;font-size:11px;font-weight:400;color:#3c3c3c;">Kibitzer</div>
<div class="t" style="left:356.0px;top:104.7px;font-size:11px;font-weight:400;color:#a8a8a8;"><u>R</u>emove</div>
<div class="t" style="left:357.5px;top:117.7px;font-size:11px;font-weight:400;color:#a8a8a8;">Kibitzer</div>
<div class="t" style="left:422.0px;top:70.7px;font-size:11px;font-weight:400;color:#a8a8a8;">Remove All Kibitzers</div>
<div class="t" style="left:422.0px;top:93.2px;font-size:11px;font-weight:400;color:#3c3c3c;">Engine Management</div>
<div class="t" style="left:422.0px;top:115.2px;font-size:11px;font-weight:400;color:#3c3c3c;">Create UCI Engine</div>
<div class="t" style="left:380.0px;top:136.2px;font-size:11px;font-weight:400;color:#606060;">Engines</div>
<div class="t" style="left:545.0px;top:104.7px;font-size:11px;font-weight:400;color:#a8a8a8;">Load Previous</div>
<div class="t" style="left:566.5px;top:117.7px;font-size:11px;font-weight:400;color:#a8a8a8;">Game</div>
<div class="t" style="left:620.0px;top:104.7px;font-size:11px;font-weight:400;color:#a8a8a8;">Load Next</div>
<div class="t" style="left:631.5px;top:117.7px;font-size:11px;font-weight:400;color:#a8a8a8;">Game</div>
<div class="t" style="left:583.5px;top:136.2px;font-size:11px;font-weight:400;color:#606060;">Database</div>
<div class="a" style="left:0;top:153px;width:808px;height:720px;background:linear-gradient(180deg,#3a4a70 0%,#4b5b86 50%,#5a6a96 100%)"></div>
<div class="a" style="left:58px;top:161px;width:692px;height:691px;background:#3e4a64;box-shadow:inset 1px 1px 0 #5c6a88, inset -1px -1px 0 #2e3850"></div>
<div class="a" style="left:76px;top:178.5px;width:657px;height:657px;background:#2a3040"></div>
<div class="sq sl" style="left:77px;top:180px;width:82px;height:81px"><svg width="82" height="82" viewBox="0 0 82 82"><use href="#br"/></svg></div>
<div class="sq sd" style="left:159px;top:180px;width:82px;height:81px"></div>
<div class="sq sl" style="left:241px;top:180px;width:82px;height:81px"><svg width="82" height="82" viewBox="0 0 82 82"><use href="#bb"/></svg></div>
<div class="sq sd" style="left:323px;top:180px;width:81px;height:81px"><svg width="82" height="82" viewBox="0 0 82 82"><use href="#bq"/></svg></div>
<div class="sq sl" style="left:404px;top:180px;width:82px;height:81px"><svg width="82" height="82" viewBox="0 0 82 82"><use href="#bk"/></svg></div>
<div class="sq sd" style="left:486px;top:180px;width:82px;height:81px"></div>
<div class="sq sl" style="left:568px;top:180px;width:82px;height:81px"></div>
<div class="sq sd" style="left:650px;top:180px;width:82px;height:81px"><svg width="82" height="82" viewBox="0 0 82 82"><use href="#br"/></svg></div>
<div class="sq sd" style="left:77px;top:261px;width:82px;height:82px"></div>
<div class="sq sl" style="left:159px;top:261px;width:82px;height:82px"></div>
<div class="sq sd" style="left:241px;top:261px;width:82px;height:82px"></div>
<div class="sq sl" style="left:323px;top:261px;width:81px;height:82px"></div>
<div class="sq sd" style="left:404px;top:261px;width:82px;height:82px"><svg width="82" height="82" viewBox="0 0 82 82"><use href="#bb"/></svg></div>
<div class="sq sl" style="left:486px;top:261px;width:82px;height:82px"><svg width="82" height="82" viewBox="0 0 82 82"><use href="#bp"/></svg></div>
<div class="sq sd" style="left:568px;top:261px;width:82px;height:82px"><svg width="82" height="82" viewBox="0 0 82 82"><use href="#bp"/></svg></div>
<div class="sq sl" style="left:650px;top:261px;width:82px;height:82px"><svg width="82" height="82" viewBox="0 0 82 82"><use href="#bp"/></svg></div>
<div class="sq sl" style="left:77px;top:343px;width:82px;height:82px"><svg width="82" height="82" viewBox="0 0 82 82"><use href="#bp"/></svg></div>
<div class="sq sd" style="left:159px;top:343px;width:82px;height:82px"></div>
<div class="sq sl" style="left:241px;top:343px;width:82px;height:82px"></div>
<div class="sq sd" style="left:323px;top:343px;width:81px;height:82px"><svg width="82" height="82" viewBox="0 0 82 82"><use href="#bp"/></svg></div>
<div class="sq sl" style="left:404px;top:343px;width:82px;height:82px"></div>
<div class="sq sd" style="left:486px;top:343px;width:82px;height:82px"><svg width="82" height="82" viewBox="0 0 82 82"><use href="#bn"/></svg></div>
<div class="sq sl" style="left:568px;top:343px;width:82px;height:82px"></div>
<div class="sq sd" style="left:650px;top:343px;width:82px;height:82px"></div>
<div class="sq sd" style="left:77px;top:425px;width:82px;height:82px"><svg width="82" height="82" viewBox="0 0 82 82"><use href="#bn"/></svg></div>
<div class="sq sl" style="left:159px;top:425px;width:82px;height:82px"><svg width="82" height="82" viewBox="0 0 82 82"><use href="#bp"/></svg></div>
<div class="sq sd" style="left:241px;top:425px;width:82px;height:82px"><svg width="82" height="82" viewBox="0 0 82 82"><use href="#bp"/></svg></div>
<div class="sq sl" style="left:323px;top:425px;width:81px;height:82px"></div>
<div class="sq sd" style="left:404px;top:425px;width:82px;height:82px"><svg width="82" height="82" viewBox="0 0 82 82"><use href="#bp"/></svg></div>
<div class="sq sl" style="left:486px;top:425px;width:82px;height:82px"></div>
<div class="sq sd" style="left:568px;top:425px;width:82px;height:82px"></div>
<div class="sq sl" style="left:650px;top:425px;width:82px;height:82px"></div>
<div class="sq sl" style="left:77px;top:507px;width:82px;height:82px"></div>
<div class="sq sd" style="left:159px;top:507px;width:82px;height:82px"></div>
<div class="sq sl" style="left:241px;top:507px;width:82px;height:82px"></div>
<div class="sq sd" style="left:323px;top:507px;width:81px;height:82px"></div>
<div class="sq sl" style="left:404px;top:507px;width:82px;height:82px"><svg width="82" height="82" viewBox="0 0 82 82"><use href="#wp"/></svg></div>
<div class="sq sd" style="left:486px;top:507px;width:82px;height:82px"></div>
<div class="sq sl" style="left:568px;top:507px;width:82px;height:82px"></div>
<div class="sq sd" style="left:650px;top:507px;width:82px;height:82px"></div>
<div class="sq sd" style="left:77px;top:589px;width:82px;height:82px"><svg width="82" height="82" viewBox="0 0 82 82"><use href="#wp"/></svg></div>
<div class="sq sl" style="left:159px;top:589px;width:82px;height:82px"></div>
<div class="sq sd" style="left:241px;top:589px;width:82px;height:82px"><svg width="82" height="82" viewBox="0 0 82 82"><use href="#wn"/></svg></div>
<div class="sq sl" style="left:323px;top:589px;width:81px;height:82px"><svg width="82" height="82" viewBox="0 0 82 82"><use href="#wp"/></svg></div>
<div class="sq sd" style="left:404px;top:589px;width:82px;height:82px"></div>
<div class="sq sl" style="left:486px;top:589px;width:82px;height:82px"><svg width="82" height="82" viewBox="0 0 82 82"><use href="#wn"/></svg></div>
<div class="sq sd" style="left:568px;top:589px;width:82px;height:82px"></div>
<div class="sq sl" style="left:650px;top:589px;width:82px;height:82px"></div>
<div class="sq sl" style="left:77px;top:671px;width:82px;height:82px"><svg width="82" height="82" viewBox="0 0 82 82"><use href="#wb"/></svg></div>
<div class="sq sd" style="left:159px;top:671px;width:82px;height:82px"><svg width="82" height="82" viewBox="0 0 82 82"><use href="#wp"/></svg></div>
<div class="sq sl" style="left:241px;top:671px;width:82px;height:82px"><svg width="82" height="82" viewBox="0 0 82 82"><use href="#wp"/></svg></div>
<div class="sq sd" style="left:323px;top:671px;width:81px;height:82px"></div>
<div class="sq sl" style="left:404px;top:671px;width:82px;height:82px"></div>
<div class="sq sd" style="left:486px;top:671px;width:82px;height:82px"><svg width="82" height="82" viewBox="0 0 82 82"><use href="#wp"/></svg></div>
<div class="sq sl" style="left:568px;top:671px;width:82px;height:82px"><svg width="82" height="82" viewBox="0 0 82 82"><use href="#wp"/></svg></div>
<div class="sq sd" style="left:650px;top:671px;width:82px;height:82px"><svg width="82" height="82" viewBox="0 0 82 82"><use href="#wp"/></svg></div>
<div class="sq sd" style="left:77px;top:753px;width:82px;height:81px"><svg width="82" height="82" viewBox="0 0 82 82"><use href="#wr"/></svg></div>
<div class="sq sl" style="left:159px;top:753px;width:82px;height:81px"></div>
<div class="sq sd" style="left:241px;top:753px;width:82px;height:81px"><svg width="82" height="82" viewBox="0 0 82 82"><use href="#wb"/></svg></div>
<div class="sq sl" style="left:323px;top:753px;width:81px;height:81px"><svg width="82" height="82" viewBox="0 0 82 82"><use href="#wq"/></svg></div>
<div class="sq sd" style="left:404px;top:753px;width:82px;height:81px"></div>
<div class="sq sl" style="left:486px;top:753px;width:82px;height:81px"><svg width="82" height="82" viewBox="0 0 82 82"><use href="#wr"/></svg></div>
<div class="sq sd" style="left:568px;top:753px;width:82px;height:81px"><svg width="82" height="82" viewBox="0 0 82 82"><use href="#wk"/></svg></div>
<div class="sq sl" style="left:650px;top:753px;width:82px;height:81px"></div>
<div class="coord" style="left:62px;top:214px;width:10px;text-align:center">8</div>
<div class="coord" style="left:62px;top:296px;width:10px;text-align:center">7</div>
<div class="coord" style="left:62px;top:378px;width:10px;text-align:center">6</div>
<div class="coord" style="left:62px;top:460px;width:10px;text-align:center">5</div>
<div class="coord" style="left:62px;top:542px;width:10px;text-align:center">4</div>
<div class="coord" style="left:62px;top:624px;width:10px;text-align:center">3</div>
<div class="coord" style="left:62px;top:706px;width:10px;text-align:center">2</div>
<div class="coord" style="left:62px;top:788px;width:10px;text-align:center">1</div>
<div class="coord" style="left:110px;top:838px;width:16px;text-align:center">A</div>
<div class="coord" style="left:192px;top:838px;width:16px;text-align:center">B</div>
<div class="coord" style="left:274px;top:838px;width:16px;text-align:center">C</div>
<div class="coord" style="left:356px;top:838px;width:16px;text-align:center">D</div>
<div class="coord" style="left:437px;top:838px;width:16px;text-align:center">E</div>
<div class="coord" style="left:519px;top:838px;width:16px;text-align:center">F</div>
<div class="coord" style="left:601px;top:838px;width:16px;text-align:center">G</div>
<div class="coord" style="left:683px;top:838px;width:16px;text-align:center">H</div>
<div class="a" style="left:808px;top:153px;width:5px;height:720px;background:#f4f4f4"></div>
<div class="a" style="left:809px;top:473px;width:3px;height:78px;background:repeating-linear-gradient(180deg,#c8c8cc 0 2px,transparent 2px 4px)"></div>
<div class="a" style="left:813px;top:153px;width:787px;height:520px;background:#3b3b3b;border-left:1px solid #5a5a5a"></div>
<div class="a" style="left:814px;top:152px;width:786px;height:21px;background:linear-gradient(180deg,#e2e8ee 0%,#cdd6e0 55%,#b6c1ce 100%);border-bottom:1px solid #f4f6f8"></div>
<div class="t" style="left:818.0px;top:157.4px;font-size:11px;font-weight:400;color:#111;">ZfZ212000</div>
<svg class="a" style="left:1560px;top:153px" width="40" height="19"><path d="M8.7,7.8 H18 L13.3,13 Z" fill="#111"/><path d="M26.5,6.5 L33.5,12.5 M33.5,6.5 L26.5,12.5" stroke="#111" stroke-width="1.6"/></svg>
<div style="position:absolute;border-radius:6px;box-shadow:inset 0 1px 0 rgba(255,255,255,0.5), 0 0 0 1px rgba(0,0,0,0.15);left:820px;top:177px;width:132px;height:32px;background:linear-gradient(180deg,#e2e0d4 0%,#d2cfc0 50%,#bcb8a6 100%)"></div>
<div class="t" style="left:826.0px;width:120px;text-align:center;top:189.1px;font-size:11.5px;font-weight:700;color:#151515;">Solution</div>
<div style="position:absolute;border-radius:6px;box-shadow:inset 0 1px 0 rgba(255,255,255,0.5), 0 0 0 1px rgba(0,0,0,0.15);left:820px;top:213px;width:132px;height:32px;background:linear-gradient(180deg,#f6ec6a 0%,#f2e02e 45%,#e8cc12 100%)"></div>
<div class="t" style="left:826.0px;width:120px;text-align:center;top:225.1px;font-size:11.5px;font-weight:700;color:#151515;">Cancel</div>
<div style="position:absolute;border-radius:6px;box-shadow:inset 0 1px 0 rgba(255,255,255,0.5), 0 0 0 1px rgba(0,0,0,0.15);left:820px;top:598px;width:132px;height:32px;background:linear-gradient(180deg,#e2e0d4 0%,#d2cfc0 50%,#bcb8a6 100%)"></div>
<div class="t" style="left:826.0px;width:120px;text-align:center;top:609.8px;font-size:11.5px;font-weight:400;color:#151515;-webkit-text-stroke:0.3px #151515;">Try again</div>
<div class="a" style="left:958px;top:177px;width:416px;height:32px;background:#000"></div>
<div class="t" style="left:1065.5px;width:200px;text-align:center;top:187.1px;font-size:12.3px;font-weight:400;color:#2ecc2e;">Chess Media System</div>
<div class="a" style="left:958px;top:213px;width:598px;height:417px;background:#000"></div>
<svg class="a" style="left:958px;top:253px" width="598" height="335" viewBox="958 253 598 335"><defs><filter id="b1" x="-20%" y="-20%" width="140%" height="140%"><feGaussianBlur stdDeviation="1.2"/></filter><filter id="b3" x="-50%" y="-50%" width="200%" height="200%"><feGaussianBlur stdDeviation="3"/></filter><filter id="b6" x="-100%" y="-100%" width="300%" height="300%"><feGaussianBlur stdDeviation="6"/></filter><filter id="b12" x="-50%" y="-50%" width="200%" height="200%"><feGaussianBlur stdDeviation="14"/></filter><radialGradient id="red" gradientUnits="userSpaceOnUse" cx="1150" cy="400" r="300"><stop offset="0" stop-color="#a8291c"/><stop offset="0.5" stop-color="#8e2318"/><stop offset="1" stop-color="#64140e"/></radialGradient><linearGradient id="hood" x1="0" y1="0" x2="0" y2="1"><stop offset="0" stop-color="#a2c0dc"/><stop offset="1" stop-color="#b0c8dc"/></linearGradient><radialGradient id="face" cx="0.42" cy="0.45" r="0.65"><stop offset="0" stop-color="#e29a6a"/><stop offset="0.6" stop-color="#d4885a"/><stop offset="1" stop-color="#a0603c"/></radialGradient><radialGradient id="glow" cx="0.5" cy="0.5" r="0.5"><stop offset="0" stop-color="#e88a5a"/><stop offset="1" stop-color="#b4281c" stop-opacity="0"/></radialGradient></defs><rect x="958" y="253" width="598" height="335" fill="#5a4230"/><path d="M1200,240 L1350,240 L1455,440 L1440,600 L1200,600 Z" fill="#362a22" filter="url(#b12)"/><path d="M1390,240 H1570 V430 L1480,420 Z" fill="#604632" filter="url(#b12)"/><path d="M1338,412 L1352,412 L1425,505 L1430,560 L1345,560 Z" fill="#3e2a20" filter="url(#b3)"/><path d="M1344,414 L1350,414 L1353,535 L1346,535 Z" fill="#6a4a34" filter="url(#b1)"/><path d="M1352,440 L1420,512 L1418,522 L1352,452 Z" fill="#5e4030" filter="url(#b1)"/><g fill="#3a4232" filter="url(#b1)"><path d="M1490,525 C1485,500 1470,480 1450,470 C1475,475 1488,490 1494,510 Z"/><path d="M1494,520 C1492,490 1480,455 1462,440 C1490,450 1500,480 1500,515 Z"/><path d="M1498,520 C1505,490 1515,460 1535,445 C1525,475 1512,500 1504,522 Z"/><path d="M1502,522 C1515,500 1535,485 1556,482 C1540,495 1520,510 1506,526 Z"/><path d="M1500,520 C1500,495 1498,465 1492,440 C1506,465 1508,495 1504,520 Z"/><path d="M1505,525 C1520,515 1540,512 1552,520 C1535,520 1520,525 1506,530 Z"/></g><rect x="1410" y="528" width="146" height="30" fill="#3a2a20" filter="url(#b3)"/><g fill="#c8b8a8" opacity="0.55" filter="url(#b1)"><rect x="1420" y="530" width="4" height="12"/><rect x="1428" y="531" width="4" height="11"/><rect x="1436" y="530" width="4" height="12"/><rect x="1444" y="532" width="4" height="10"/><rect x="1452" y="531" width="4" height="11"/></g><rect x="1440" y="556" width="116" height="32" fill="#664c38" filter="url(#b1)"/><rect x="958" y="253" width="261" height="335" fill="url(#red)"/><ellipse cx="1187" cy="425" rx="14" ry="60" fill="#d86a44" opacity="0.55" filter="url(#b6)"/><ellipse cx="1062.6" cy="400.5" rx="77" ry="70" fill="none" stroke="#f0e6e0" stroke-width="5"/><ellipse cx="1062.6" cy="400" rx="67.5" ry="62.2" fill="#ede3de"/><path d="M1032,426.5 L1097,423 L1108,402 C1110,398.5 1116,399 1117.5,403.5 L1093,444.5 Z" fill="#1e2638"/><path d="M1025.7,361 H1088 Q1094,361 1094,367 V421.5 H1025.7 Z" fill="#b2242a"/><rect x="1027.5" y="359.0" width="6.9" height="6.4" fill="#111"/><rect x="1027.5" y="365.4" width="6.9" height="6.4" fill="#f2ece8"/><rect x="1027.5" y="371.8" width="6.9" height="6.4" fill="#111"/><rect x="1027.5" y="378.2" width="6.9" height="6.4" fill="#f2ece8"/><rect x="1027.5" y="384.6" width="6.9" height="6.4" fill="#111"/><rect x="1034.4" y="359.0" width="6.9" height="6.4" fill="#f2ece8"/><rect x="1034.4" y="365.4" width="6.9" height="6.4" fill="#111"/><rect x="1034.4" y="371.8" width="6.9" height="6.4" fill="#f2ece8"/><rect x="1034.4" y="378.2" width="6.9" height="6.4" fill="#111"/><rect x="1034.4" y="384.6" width="6.9" height="6.4" fill="#f2ece8"/><rect x="1041.3" y="359.0" width="6.9" height="6.4" fill="#111"/><rect x="1041.3" y="365.4" width="6.9" height="6.4" fill="#f2ece8"/><rect x="1041.3" y="371.8" width="6.9" height="6.4" fill="#111"/><rect x="1041.3" y="378.2" width="6.9" height="6.4" fill="#f2ece8"/><rect x="1041.3" y="384.6" width="6.9" height="6.4" fill="#111"/><rect x="1048.2" y="359.0" width="6.9" height="6.4" fill="#f2ece8"/><rect x="1048.2" y="365.4" width="6.9" height="6.4" fill="#111"/><rect x="1048.2" y="371.8" width="6.9" height="6.4" fill="#f2ece8"/><rect x="1048.2" y="378.2" width="6.9" height="6.4" fill="#111"/><rect x="1048.2" y="384.6" width="6.9" height="6.4" fill="#f2ece8"/><rect x="1055.1" y="359.0" width="6.9" height="6.4" fill="#111"/><rect x="1055.1" y="365.4" width="6.9" height="6.4" fill="#f2ece8"/><rect x="1055.1" y="371.8" width="6.9" height="6.4" fill="#111"/><rect x="1055.1" y="378.2" width="6.9" height="6.4" fill="#f2ece8"/><rect x="1055.1" y="384.6" width="6.9" height="6.4" fill="#111"/><text x="1032" y="417" font-family="Liberation Sans" font-weight="700" font-size="14" textLength="55" lengthAdjust="spacingAndGlyphs" fill="#f4ece8">ChessBase</text><clipPath id="hc2"><path d="M1108,590 C1113,562 1122,540 1143,526 C1168,508 1196,492 1210,472 C1214,465 1218,461 1224,460 L1334,461 C1346,465 1349,475 1351,486 C1364,500 1390,510 1410,522 C1428,540 1442,565 1450,590 Z"/></clipPath><path d="M1108,590 C1113,562 1122,540 1143,526 C1168,508 1196,492 1210,472 C1214,465 1218,461 1224,460 L1334,461 C1346,465 1349,475 1351,486 C1364,500 1390,510 1410,522 C1428,540 1442,565 1450,590 Z" fill="url(#hood)"/><g clip-path="url(#hc2)"><path d="M1220,476 C1222,505 1236,538 1256,558 C1276,545 1292,525 1300,505 L1290,476 Z" fill="#2e2a28"/><path d="M1236,468 C1240,500 1254,530 1272,538 C1292,530 1308,500 1316,468 Z" fill="#b06e48"/><path d="M1212,466 C1206,500 1214,535 1232,556 L1246,546 C1232,525 1224,500 1224,472 Z" fill="#8eaecb" filter="url(#b1)"/><path d="M1338,466 C1344,505 1330,530 1306,548 L1298,534 C1314,516 1320,494 1320,476 Z" fill="#8eaecb" filter="url(#b1)"/><path d="M1150,530 C1165,545 1175,570 1180,590 M1400,525 C1385,545 1375,570 1372,590" stroke="#8aa6c0" stroke-width="6" fill="none" filter="url(#b3)"/></g><ellipse cx="1215" cy="412" rx="6" ry="15" fill="#c47a4c"/><ellipse cx="1331" cy="410" rx="6" ry="15" fill="#a8643c"/><path d="M1206,392 C1200,350 1222,306 1272,304 C1318,304 1344,340 1340,392 L1326,392 C1326,360 1306,338 1272,338 C1240,338 1220,360 1220,392 Z" fill="#5e3e2a" filter="url(#b3)"/><path d="M1220,372 C1220,346 1242,334 1272,334 C1304,334 1326,346 1326,372 C1328,405 1326,445 1314,470 C1302,492 1286,502 1270,502 C1254,502 1240,492 1230,472 C1218,446 1216,404 1220,372 Z" fill="url(#face)"/><path d="M1226,360 C1236,330 1300,326 1320,356 C1300,342 1250,340 1226,360 Z" fill="#7a4e36" opacity="0.7" filter="url(#b3)"/><path d="M1300,350 C1318,370 1326,420 1318,460 C1330,430 1332,380 1318,350 Z" fill="#6a3e28" opacity="0.6" filter="url(#b3)"/><g fill="#6a4a40" opacity="0.7" filter="url(#b1)"><ellipse cx="1241" cy="409" rx="8" ry="3"/><ellipse cx="1292" cy="411" rx="8" ry="3"/></g><path d="M1232,400 C1238,396 1248,396 1254,400 M1282,402 C1288,398 1298,398 1304,402" stroke="#7a4a30" stroke-width="2" fill="none" opacity="0.6" filter="url(#b1)"/><path d="M1262,420 L1258,448 C1262,454 1274,454 1280,450" stroke="#9a5a38" stroke-width="2" fill="none" opacity="0.5" filter="url(#b1)"/><path d="M1254,468 C1264,465 1280,465 1290,469" stroke="#8a4a38" stroke-width="2.2" fill="none" opacity="0.8" filter="url(#b1)"/><path d="M1216,537 V588 M1296,523 V588" stroke="#eef0f2" stroke-width="3.5" stroke-linecap="round"/><circle cx="1242" cy="553" r="3.5" fill="#5a6a7a"/></svg>
<svg class="a" style="left:1562px;top:177px" width="32" height="32"><ellipse cx="15" cy="15.5" rx="11" ry="11.5" fill="#c4cccc" stroke="#e8eeee" stroke-width="1.5"/><ellipse cx="14" cy="15" rx="7.5" ry="8" fill="#8a9898"/><ellipse cx="13.5" cy="14.5" rx="5" ry="5.5" fill="#b8c8c8"/><ellipse cx="12.5" cy="13" rx="2.5" ry="2.5" fill="#e8f0f0"/></svg>
<div class="a" style="left:1572px;top:250px;width:13px;height:276px;border-radius:6.5px;background:#0a0a0a;box-shadow:0 0 0 1px #5a5a5a"></div>
<svg class="a" style="left:1572px;top:250px" width="13" height="276"><rect x="4" y="8.0" width="5" height="1.3" fill="#555"/><rect x="4" y="14.9" width="5" height="1.3" fill="#555"/><rect x="4" y="21.8" width="5" height="1.3" fill="#555"/><rect x="4" y="28.7" width="5" height="1.3" fill="#555"/><rect x="4" y="35.6" width="5" height="1.3" fill="#555"/><rect x="4" y="42.5" width="5" height="1.3" fill="#555"/><rect x="4" y="49.4" width="5" height="1.3" fill="#555"/><rect x="4" y="56.3" width="5" height="1.3" fill="#555"/><rect x="4" y="63.2" width="5" height="1.3" fill="#555"/><rect x="4" y="70.1" width="5" height="1.3" fill="#555"/><rect x="4" y="77.0" width="5" height="1.3" fill="#555"/><rect x="4" y="83.9" width="5" height="1.3" fill="#555"/><rect x="4" y="90.8" width="5" height="1.3" fill="#555"/><rect x="4" y="97.7" width="5" height="1.3" fill="#555"/><rect x="4" y="104.6" width="5" height="1.3" fill="#555"/><rect x="4" y="111.5" width="5" height="1.3" fill="#555"/><rect x="4" y="118.4" width="5" height="1.3" fill="#555"/><rect x="4" y="125.3" width="5" height="1.3" fill="#555"/><rect x="4" y="132.2" width="5" height="1.3" fill="#555"/><rect x="4" y="139.1" width="5" height="1.3" fill="#555"/><rect x="4" y="146.0" width="5" height="1.3" fill="#555"/><rect x="4" y="152.9" width="5" height="1.3" fill="#555"/><rect x="4" y="159.8" width="5" height="1.3" fill="#555"/><rect x="4" y="166.7" width="5" height="1.3" fill="#555"/><rect x="4" y="173.6" width="5" height="1.3" fill="#555"/><rect x="4" y="180.5" width="5" height="1.3" fill="#555"/><rect x="4" y="187.4" width="5" height="1.3" fill="#555"/><rect x="4" y="194.3" width="5" height="1.3" fill="#555"/><rect x="4" y="201.2" width="5" height="1.3" fill="#555"/><rect x="4" y="208.1" width="5" height="1.3" fill="#555"/><rect x="4" y="215.0" width="5" height="1.3" fill="#555"/><rect x="4" y="221.9" width="5" height="1.3" fill="#555"/><rect x="4" y="228.8" width="5" height="1.3" fill="#555"/><rect x="4" y="235.7" width="5" height="1.3" fill="#555"/><rect x="4" y="242.6" width="5" height="1.3" fill="#555"/><rect x="4" y="249.5" width="5" height="1.3" fill="#555"/><rect x="4" y="256.4" width="5" height="1.3" fill="#555"/><rect x="4" y="263.3" width="5" height="1.3" fill="#555"/></svg>
<div class="a" style="left:1566px;top:290px;width:24px;height:25px;background:linear-gradient(180deg,#fafafa,#c8c8c8);border:1px solid #888"><div style="position:absolute;left:3px;top:5px;width:16px;height:12px;background:repeating-linear-gradient(180deg,#999 0 1px,transparent 1px 3px)"></div></div>
<div class="t" style="left:1563.0px;width:30px;text-align:center;top:552.7px;font-size:11px;font-weight:400;color:#a8a858;">78</div>
<svg class="a" style="left:820.3px;top:637.4px" width="30" height="30"><defs><linearGradient id="pgplay" x1="0" y1="0" x2="0" y2="1"><stop offset="0" stop-color="#9fbdf0"/><stop offset="0.5" stop-color="#3f70d0"/><stop offset="1" stop-color="#7aa0e8"/></linearGradient></defs><circle cx="15" cy="15" r="13" fill="#e8ecf4"/><circle cx="15" cy="15" r="11" fill="url(#pgplay)"/><path d="M12,9.5 L20,15 L12,20.5 Z" fill="#fff"/></svg>
<svg class="a" style="left:992.6px;top:637.4px" width="30" height="30"><defs><linearGradient id="pgrew" x1="0" y1="0" x2="0" y2="1"><stop offset="0" stop-color="#9fbdf0"/><stop offset="0.5" stop-color="#3f70d0"/><stop offset="1" stop-color="#7aa0e8"/></linearGradient></defs><circle cx="15" cy="15" r="13" fill="#e8ecf4"/><circle cx="15" cy="15" r="11" fill="url(#pgrew)"/><path d="M15,10 L9,15 L15,20 Z M21,10 L15,15 L21,20 Z" fill="#fff"/></svg>
<svg class="a" style="left:1030.4px;top:637.4px" width="30" height="30"><defs><linearGradient id="pgff" x1="0" y1="0" x2="0" y2="1"><stop offset="0" stop-color="#9fbdf0"/><stop offset="0.5" stop-color="#3f70d0"/><stop offset="1" stop-color="#7aa0e8"/></linearGradient></defs><circle cx="15" cy="15" r="13" fill="#e8ecf4"/><circle cx="15" cy="15" r="11" fill="url(#pgff)"/><path d="M9,10 L15,15 L9,20 Z M15,10 L21,15 L15,20 Z" fill="#fff"/></svg>
<div class="a" style="left:858px;top:636px;width:128px;height:32px;background:#000"></div>
<div class="t" style="left:879.2px;top:646.2px;font-size:12.2px;font-weight:400;color:#2ecc2e;">0:03:14 0:03:17</div>
<div class="a" style="left:1112px;top:645px;width:340px;height:16px;border-radius:8px;background:#0a0a0a;box-shadow:0 0 0 1px #666"></div>
<svg class="a" style="left:1112px;top:645px" width="320" height="16"><rect x="14.0" y="4" width="1.6" height="8" fill="#6a6a6a"/><rect x="22.4" y="4" width="1.6" height="8" fill="#6a6a6a"/><rect x="30.9" y="4" width="1.6" height="8" fill="#6a6a6a"/><rect x="39.3" y="4" width="1.6" height="8" fill="#6a6a6a"/><rect x="47.8" y="4" width="1.6" height="8" fill="#6a6a6a"/><rect x="56.2" y="4" width="1.6" height="8" fill="#6a6a6a"/><rect x="64.7" y="4" width="1.6" height="8" fill="#6a6a6a"/><rect x="73.1" y="4" width="1.6" height="8" fill="#6a6a6a"/><rect x="81.6" y="4" width="1.6" height="8" fill="#6a6a6a"/><rect x="90.0" y="4" width="1.6" height="8" fill="#6a6a6a"/><rect x="98.5" y="4" width="1.6" height="8" fill="#6a6a6a"/><rect x="106.9" y="4" width="1.6" height="8" fill="#6a6a6a"/><rect x="115.4" y="4" width="1.6" height="8" fill="#6a6a6a"/><rect x="123.8" y="4" width="1.6" height="8" fill="#6a6a6a"/><rect x="132.3" y="4" width="1.6" height="8" fill="#6a6a6a"/><rect x="140.8" y="4" width="1.6" height="8" fill="#6a6a6a"/><rect x="149.2" y="4" width="1.6" height="8" fill="#6a6a6a"/><rect x="157.6" y="4" width="1.6" height="8" fill="#6a6a6a"/><rect x="166.1" y="4" width="1.6" height="8" fill="#6a6a6a"/><rect x="174.5" y="4" width="1.6" height="8" fill="#6a6a6a"/><rect x="183.0" y="4" width="1.6" height="8" fill="#6a6a6a"/><rect x="191.4" y="4" width="1.6" height="8" fill="#6a6a6a"/><rect x="199.9" y="4" width="1.6" height="8" fill="#6a6a6a"/><rect x="208.3" y="4" width="1.6" height="8" fill="#6a6a6a"/><rect x="216.8" y="4" width="1.6" height="8" fill="#6a6a6a"/><rect x="225.2" y="4" width="1.6" height="8" fill="#6a6a6a"/><rect x="233.7" y="4" width="1.6" height="8" fill="#6a6a6a"/><rect x="242.1" y="4" width="1.6" height="8" fill="#6a6a6a"/><rect x="250.6" y="4" width="1.6" height="8" fill="#6a6a6a"/><rect x="259.0" y="4" width="1.6" height="8" fill="#6a6a6a"/><rect x="267.5" y="4" width="1.6" height="8" fill="#6a6a6a"/><rect x="275.9" y="4" width="1.6" height="8" fill="#6a6a6a"/><rect x="284.4" y="4" width="1.6" height="8" fill="#6a6a6a"/><rect x="292.8" y="4" width="1.6" height="8" fill="#6a6a6a"/><rect x="301.3" y="4" width="1.6" height="8" fill="#6a6a6a"/><rect x="309.8" y="4" width="1.6" height="8" fill="#6a6a6a"/><rect x="318.2" y="4" width="1.6" height="8" fill="#6a6a6a"/><rect x="326.6" y="4" width="1.6" height="8" fill="#6a6a6a"/><rect x="335.1" y="4" width="1.6" height="8" fill="#6a6a6a"/></svg>
<div class="a" style="left:1428px;top:643px;width:24px;height:23px;background:linear-gradient(90deg,#f0f0f0,#d0d0d0);border:1px solid #999"><div style="position:absolute;left:5px;top:3px;width:12px;height:15px;background:repeating-linear-gradient(90deg,#9a9a9a 0 1px,transparent 1px 3px)"></div></div>
<div class="a" style="left:1550px;top:636px;width:32px;height:32px;background:#fff"></div>
<div class="a" style="left:1588px;top:636px;width:12px;height:32px;background:#fff"></div>
<div class="a" style="left:813px;top:673px;width:787px;height:6px;background:#f0f0f0;border-left:1px solid #5a5a5a"></div>
<div class="a" style="left:1145px;top:675px;width:52px;height:3px;background:repeating-linear-gradient(90deg,#c4c4c4 0 2px,transparent 2px 4px)"></div>
<div class="a" style="left:813px;top:679px;width:787px;height:20px;background:linear-gradient(180deg,#dfe6ee 0%,#cdd6e0 55%,#bac5d2 100%);border-top:1px solid #8a8f96;border-left:1px solid #5a5a5a"></div>
<div class="t" style="left:818.5px;top:683.6px;font-size:12px;font-weight:400;color:#111;">Notation + Openings Book</div>
<svg class="a" style="left:1560px;top:680px" width="40" height="19"><path d="M8.7,7.8 H18 L13.3,13 Z" fill="#111"/><path d="M26.5,6.5 L33.5,12.5 M33.5,6.5 L26.5,12.5" stroke="#111" stroke-width="1.6"/></svg>
<div class="a" style="left:813px;top:699px;width:787px;height:174px;background:#f0f0f0;border-left:1px solid #5a5a5a"></div>
<div class="a" style="left:816px;top:702px;width:58px;height:21px;background:#f0f0f0;border:1px solid #dadada"></div>
<div class="t" style="left:822.5px;top:706.3px;font-size:12px;font-weight:400;color:#111;">Notation</div>
<div class="a" style="left:874px;top:700px;width:56px;height:24px;background:#fff;border:1px solid #e4e4e4;border-bottom:none"></div>
<div class="t" style="left:881.5px;top:704.3px;font-size:12px;font-weight:400;color:#111;">Training</div>
<div class="a" style="left:930px;top:702px;width:46px;height:21px;background:#f0f0f0;border:1px solid #dadada"></div>
<div class="t" style="left:935.0px;top:706.3px;font-size:12px;font-weight:400;color:#111;">Table</div>
<div class="a" style="left:976px;top:702px;width:73px;height:21px;background:#f0f0f0;border:1px solid #dadada"></div>
<div class="t" style="left:983.0px;top:706.3px;font-size:12px;font-weight:400;color:#111;">Score sheet</div>
<div class="a" style="left:1049px;top:702px;width:90.5px;height:21px;background:#f0f0f0;border:1px solid #dadada"></div>
<div class="t" style="left:1055.0px;top:706.3px;font-size:12px;font-weight:400;color:#111;">Openings Book</div>
<div class="a" style="left:814px;top:723px;width:786px;height:1px;background:#e6e6e6"></div>
<div class="a" style="left:814px;top:725px;width:786px;height:47px;background:linear-gradient(180deg,#f6f6f6 0%,#ececec 60%,#dedede 100%);border-bottom:1.5px solid #111"></div>
<div class="t" style="left:814px;width:786px;text-align:center;top:731.4px;font-size:18px;color:#111"><b>Vachier-Lagrave,Maxime</b>2737 <b>- Keymer,Vincent</b>2696</div>
<div class="t" style="left:814px;width:786px;text-align:center;top:754.3px;font-size:17.4px;color:#111"><b>C84</b> World Rapid 2022 (13.3) 28.12.2022</div>
<div class="t" style="left:820.5px;top:777.4px;font-size:17px;font-weight:400;color:#1a1a1a;letter-spacing:-0.4px;">10.</div>
<svg class="a" style="left:842px;top:776px" width="17" height="17" viewBox="0 0 82 82"><path d="M23.2,11.4 L30.5,19.5 L37.4,10.9 L42,19.8 C55,21 66,30 69.5,44 C72,54 73,64 73,73 L28.2,73 C28,66 30,62 33,58 C36,54 40,51 43,46 C37,52 29,58 21,61 C16,62.5 13,60 11.5,56 L9.6,49 C10,45 12,42.5 14,40 C17,36 19,32 20,28 C21,24 22,20 23.2,11.4 Z" fill="none" stroke="#111" stroke-width="5" stroke-linejoin="round"/><path d="M25,20 L22,34 L12,50" fill="none" stroke="#111" stroke-width="8"/></svg>
<div class="t" style="left:859.0px;top:777.4px;font-size:17px;font-weight:400;color:#1a1a1a;letter-spacing:-0.4px;">c3</div>
<div class="a" style="left:825px;top:849px;width:775px;height:24px;background:#fdfdfd;border-top:1px solid #a8a8a8;border-bottom:1px solid #e0e0e0"></div>
<div class="a" style="left:818px;top:851px;width:2px;height:20px;background:repeating-linear-gradient(180deg,#a0a0a0 0 2px,transparent 2px 4px)"></div>
<div class="a" style="left:0;top:0;width:1600px;height:900px;pointer-events:none"><svg class="a" style="left:0;top:0" width="1600" height="900" viewBox="0 0 1600 900"><path d="M835.6,855 L840,860.5 H837.2 V867 H834 V860.5 H831.2 Z" fill="#0e6e1a"/><path d="M857,857 L868,868 M868,856 L857,868" stroke="#c22a3a" stroke-width="1.4"/><path d="M858,858 L864,864 L866,866" stroke="#7a7a7a" stroke-width="2" opacity="0.5"/><path d="M887.5,856 H891 V867.5 H887.5" fill="none" stroke="#111" stroke-width="2"/><circle cx="917.5" cy="857.5" r="2" fill="#111"/><path d="M915,860 H920 L921,865 L922.5,868 H912.5 L914,865 Z" fill="#111"/><text x="911" y="860" font-size="6" fill="#c22a3a" font-family="Liberation Sans">T</text><circle cx="943.5" cy="857.5" r="2" fill="#d02a36"/><path d="M941,860 H946 L947,865 L948.5,868 H938.5 L940,865 Z" fill="#d02a36"/><text x="948" y="868" font-size="6" fill="#111" font-family="Liberation Sans">T</text></svg></div>
<div class="t" style="left:955.6px;width:30px;text-align:center;top:852.4px;font-size:19px;font-weight:400;color:#1a1a1a;">!!</div>
<div class="t" style="left:982.8px;width:30px;text-align:center;top:852.4px;font-size:19px;font-weight:400;color:#1a1a1a;">!</div>
<div class="t" style="left:1010.0px;width:30px;text-align:center;top:852.4px;font-size:19px;font-weight:400;color:#1a1a1a;">!?</div>
<div class="t" style="left:1036.6px;width:30px;text-align:center;top:852.4px;font-size:19px;font-weight:400;color:#1a1a1a;">?!</div>
<div class="t" style="left:1063.4px;width:30px;text-align:center;top:852.4px;font-size:19px;font-weight:400;color:#1a1a1a;">?</div>
<div class="t" style="left:1090.6px;width:30px;text-align:center;top:852.4px;font-size:19px;font-weight:400;color:#1a1a1a;">??</div>
<svg class="a" style="left:0;top:0;pointer-events:none" width="1600" height="900"><path d="M1125.7,861.5 H1133.3 M1129.5,857.7 V865.3 M1134,861.5 H1141 M1155.8,858.5 H1164.2 M1160,854.3 V862.7 M1155,866.5 H1165 M1183.5,857.5 H1191.5 M1187.5,853.5 V861.5 M1183,864.3 H1192 M1183,867.5 H1192 M1208.5,859 H1219.5 M1208.5,864 H1219.5 M1262.5,865 H1275 M1262.5,868 H1275 M1290,855.5 H1299.5 M1290,858.8 H1299.5 M1290.5,864.5 H1299.1 M1294.8,860.2 V868.8 M1316,855.5 H1326 M1316.5,862.5 H1325.5 M1321,858.0 V867.0 M1340,861.5 H1347 M1347.7,861.5 H1355.3 M1351.5,857.7 V865.3 M1370,858 H1381 M1378,855 L1381,858 L1378,861 M1381,864.5 H1370 M1373,861.5 L1370,864.5 L1373,867.5" stroke="#111" stroke-width="1.4" fill="none"/><g fill="none" stroke="#111" stroke-width="1.5"><path d="M1242,862 C1240,858.5 1236.5,858.8 1236.5,862 C1236.5,865.2 1240,865.5 1242,862 C1244,858.5 1247.5,858.8 1247.5,862 C1247.5,865.2 1244,865.5 1242,862 Z"/></g><g fill="none" stroke="#111" stroke-width="1.4"><path d="M1268.7,858.5 C1267,855.5 1263.5,855.8 1263.5,858.5 C1263.5,861.2 1267,861.5 1268.7,858.5 C1270.5,855.5 1274,855.8 1274,858.5 C1274,861.2 1270.5,861.5 1268.7,858.5 Z"/></g></svg>
<svg class="a" style="left:1393px;top:853px" width="20" height="16"><path d="M2,11 L10,3 L17,5 L9,13 Z" fill="#e87a8a"/><path d="M2,11 L9,13 L9,15 L2,13 Z" fill="#6a8ad0"/><path d="M2,11 L6,7 L13,9 L9,13 Z" fill="#8aa8e8"/></svg>
<div class="a" style="left:0;top:873px;width:1600px;height:25px;background:#f0f0f0"></div>
<div class="t" style="left:10.0px;top:880.5px;font-size:11.2px;font-weight:400;color:#444;">C84: Closed Ruy Lopez: Unusual White 6th moves</div>
<div class="a" style="left:1373px;top:879px;width:224px;height:15px;background:#fff;border:1px solid #555"></div>
<div class="t" style="left:1377.0px;top:881.7px;font-size:11px;font-weight:400;color:#111;">0%</div>
<div class="a" style="left:1414px;top:883px;width:132px;height:7px;background:#d8d8d8;border:1px solid #c0c0c0"></div>
<div class="a" style="left:0;top:898px;width:1600px;height:2px;background:#262626"></div>
<div class="a" style="left:48px;top:898px;width:288px;height:2px;background:#ececec;border-top:1px solid #b8b8b8"></div>
</body></html>
